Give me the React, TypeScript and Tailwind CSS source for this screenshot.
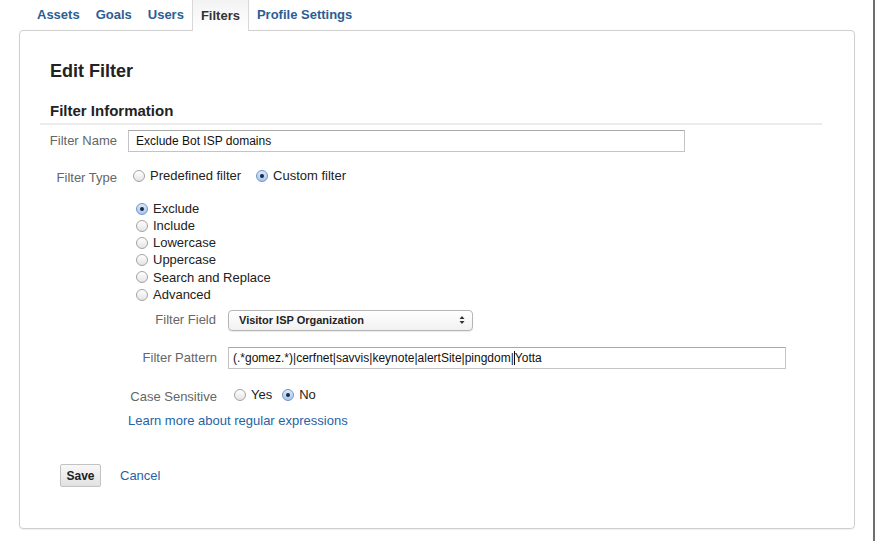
import React from 'react';

// ── 小元件 ──────────────────────────────────────────────────────────────────
function Radio({ checked = false }: { checked?: boolean }) {
  if (checked) {
    return (
      <span className="inline-flex w-[12px] h-[12px] shrink-0 rounded-full border border-[#6f93c9] bg-gradient-to-b from-[#dbe8fa] to-[#a8c6ee] items-center justify-center">
        <span className="w-[4px] h-[4px] rounded-full bg-[#1c2a3f]" />
      </span>
    );
  }
  return (
    <span className="inline-block w-[12px] h-[12px] shrink-0 rounded-full border border-[#a3a3a3] bg-gradient-to-b from-white to-[#e4e4e4]" />
  );
}

function RadioOption({ label, checked }: { label: string; checked?: boolean }) {
  return (
    <label className="flex items-center gap-[5px] text-[13px] text-[#222]">
      <Radio checked={checked} />
      <span>{label}</span>
    </label>
  );
}

const tabs = ['Assets', 'Goals', 'Users', 'Filters', 'Profile Settings'];

export default function App() {
  return (
    <div
      className="w-[875px] h-[541px] bg-white border-r-2 border-[#6e6e6e]"
      style={{ fontFamily: '"Liberation Sans", Arial, sans-serif' }}
    >
      {/* 分頁 */}
      <div className="flex h-[30px] pl-[29px] relative z-10">
        {tabs.map(t =>
          t === 'Filters' ? (
            <div
              key={t}
              className="px-[8px] h-[31px] flex items-center text-[13px] font-bold text-[#333] bg-gradient-to-b from-[#f3f3f3] to-white border-x border-[#d8d8d8]"
            >
              {t}
            </div>
          ) : (
            <div key={t} className="px-[8px] h-[30px] flex items-center text-[13px] font-bold text-[#2b5e95]">
              {t}
            </div>
          )
        )}
      </div>

      {/* 面板 */}
      <div className="ml-[19px] w-[836px] h-[499px] border border-[#cfcfcf] rounded-[4px] shadow-[0_1px_1px_rgba(0,0,0,0.06)]">
        <div className="pl-[20px] pt-[29px]">
          <h1 className="ml-[10px] text-[18px] leading-[22px] font-bold text-[#222]">Edit Filter</h1>
          <h2 className="ml-[10px] mt-[20px] text-[15px] leading-[18px] font-bold text-[#222]">Filter Information</h2>
          <div className="mt-[3px] w-[782px] h-[2px] bg-[#ebebeb]" />

          {/* Filter Name */}
          <div className="mt-[5px] flex items-center h-[22px]">
            <span className="w-[77px] text-right text-[13px] text-[#666]">Filter Name</span>
            <div className="ml-[11px] w-[557px] h-[22px] border border-[#c4c4c4] border-t-[#a9a9a9] flex items-center pl-[7px] text-[12px] text-[#111]">
              Exclude Bot ISP domains
            </div>
          </div>

          {/* Filter Type */}
          <div className="mt-[14px] flex items-center h-[20px]">
            <span className="w-[77px] text-right text-[13px] text-[#666] pt-[3px]">Filter Type</span>
            <div className="ml-[16px] flex items-center gap-[6px]">
              <RadioOption label="Predefined filter" />
              <span className="w-[3px]" />
              <RadioOption label="Custom filter" checked />
            </div>
          </div>

          {/* 自訂篩選類型 */}
          <div className="mt-[14px] ml-[96px] flex flex-col">
            {['Exclude', 'Include', 'Lowercase', 'Uppercase', 'Search and Replace', 'Advanced'].map((o, i) => (
              <div key={o} className="h-[17.2px] flex items-center">
                <RadioOption label={o} checked={i === 0} />
              </div>
            ))}
          </div>

          {/* Filter Field */}
          <div className="mt-[6px] flex items-center h-[22px]">
            <span className="w-[176px] text-right text-[13px] text-[#666]">Filter Field</span>
            <div className="ml-[12px] w-[245px] h-[21px] rounded-[4px] border border-[#b5b5b5] bg-gradient-to-b from-white to-[#f1f1f1] shadow-[0_1px_1px_rgba(0,0,0,0.08)] flex items-center justify-between pl-[10px] pr-[7px]">
              <span className="text-[11px] font-bold text-[#222]">Visitor ISP Organization</span>
              <svg width="6" height="10" viewBox="0 0 6 10">
                <path d="M3 1 L5.5 4 L0.5 4 Z" fill="#333" />
                <path d="M3 9 L5.5 6 L0.5 6 Z" fill="#333" />
              </svg>
            </div>
          </div>

          {/* Filter Pattern */}
          <div className="mt-[16px] flex items-center h-[22px]">
            <span className="w-[177px] text-right text-[13px] text-[#666]">Filter Pattern</span>
            <div className="ml-[11px] w-[558px] h-[22px] border border-[#c4c4c4] border-t-[#a9a9a9] flex items-center pl-[4px] text-[12px] text-[#111]">
              (.*gomez.*)|cerfnet|savvis|keynote|alertSite|pingdom|<span className="inline-block w-px h-[14px] bg-[#111]" />Yotta
            </div>
          </div>

          {/* Case Sensitive */}
          <div className="mt-[16px] flex items-center h-[20px]">
            <span className="w-[177px] text-right text-[13px] text-[#666] pt-[3px]">Case Sensitive</span>
            <div className="ml-[17px] flex items-center gap-[10px]">
              <RadioOption label="Yes" />
              <RadioOption label="No" checked />
            </div>
          </div>

          <div className="mt-[7px] ml-[88px] h-[18px] flex items-center text-[13px] text-[#2563a6]">
            Learn more about regular expressions
          </div>

          {/* 按鈕 */}
          <div className="mt-[34px] ml-[20px] flex items-center gap-[19px]">
            <button className="w-[41px] h-[23px] rounded-[2px] border border-[#c2c2c2] bg-gradient-to-b from-[#f8f8f8] to-[#e2e2e2] text-[12px] font-bold text-[#222]">
              Save
            </button>
            <span className="text-[13px] text-[#2563a6]">Cancel</span>
          </div>
        </div>
      </div>
    </div>
  );
}
